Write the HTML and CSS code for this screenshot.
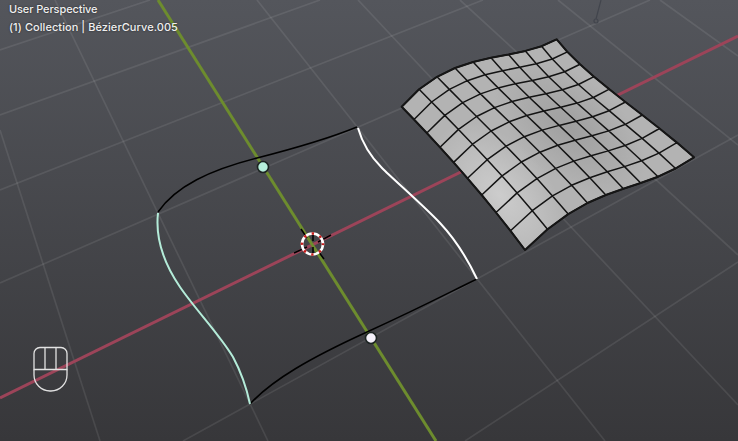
FILE: index.html
```html
<!DOCTYPE html>
<html lang="en">
<head>
    <meta charset="UTF-8">
    <title>User Perspective</title>
    <link rel="stylesheet" href="styles.css">
</head>
<body>
    <div class="viewport">
        <svg class="scene" viewBox="0 0 738 441" width="738" height="441">
            <defs>
                <radialGradient id="shade-dark" gradientUnits="userSpaceOnUse" cx="0" cy="0" r="1" gradientTransform="translate(570 128) rotate(40) scale(90 50)">
                    <stop offset="0" stop-color="#949494" stop-opacity="0.65"/>
                    <stop offset="1" stop-color="#949494" stop-opacity="0"/>
                </radialGradient>
                <radialGradient id="shade-light" gradientUnits="userSpaceOnUse" cx="0" cy="0" r="1" gradientTransform="translate(500 195) rotate(50) scale(85 50)">
                    <stop offset="0" stop-color="#cfcfcf" stop-opacity="0.9"/>
                    <stop offset="1" stop-color="#cfcfcf" stop-opacity="0"/>
                </radialGradient>
                <clipPath id="patch-clip"><path id="patch-outline"/></clipPath>
            </defs>

            <!-- floor grid -->
            <g class="grid-lines">
                <line x1="0" y1="130" x2="100" y2="441"/>
                <line x1="55" y1="0" x2="268" y2="441"/>
                <line x1="257" y1="0" x2="605" y2="441"/>
                <line x1="358" y1="0" x2="738" y2="405"/>
                <line x1="460" y1="0" x2="738" y2="255"/>
                <line x1="558" y1="0" x2="738" y2="145"/>
                <line x1="660" y1="0" x2="738" y2="56"/>
                <line x1="0" y1="50" x2="150" y2="0"/>
                <line x1="0" y1="115" x2="320" y2="0"/>
                <line x1="0" y1="190" x2="483" y2="0"/>
                <line x1="0" y1="283" x2="650" y2="0"/>
                <line x1="183" y1="441" x2="738" y2="135"/>
                <line x1="465" y1="441" x2="738" y2="262"/>
            </g>
            <line class="axis-x" x1="0" y1="398" x2="738" y2="36"/>
            <line class="axis-y" x1="158" y1="0" x2="436" y2="441"/>

            <!-- light far away -->
            <line class="lamp" x1="601" y1="0" x2="596" y2="19"/>
            <circle class="lamp" cx="596" cy="21" r="2"/>

            <!-- surface -->
            <g clip-path="url(#patch-clip)">
                <rect class="patch-base" x="400" y="38" width="296" height="214"/>
                <rect x="400" y="38" width="296" height="214" fill="url(#shade-light)"/>
                <rect x="400" y="38" width="296" height="214" fill="url(#shade-dark)"/>
            </g>
            <path id="patch-wires" class="patch-wires"/>
            <path id="patch-edge" class="patch-edge"/>

            <!-- bezier curves -->
            <path class="curve curve-black" d="M158 212 C176 186 210 170 257 158 S330 138 357 127"/>
            <path class="curve curve-black" d="M250 404 C272 380 310 358 367 332 S450 292 477 279"/>
            <path class="curve curve-cyan" d="M158 213 C155 240 165 265 180 287 S220 335 233 357 C240 370 247 390 250 404"/>
            <path class="curve curve-white" d="M358 128 C362 142 371 157 382 168 S425 207 440 223 S468 260 477 279"/>
            <circle class="handle handle-cyan" cx="263" cy="167" r="5.5"/>
            <circle class="handle handle-white" cx="371" cy="338" r="5.5"/>

            <!-- 3d cursor -->
            <g class="cursor-cross">
                <line x1="301" y1="229" x2="307" y2="238"/>
                <line x1="318" y1="251" x2="324" y2="259"/>
                <line x1="294" y1="253" x2="307" y2="247"/>
                <line x1="318" y1="242" x2="331" y2="235"/>
                <line x1="313" y1="233" x2="313" y2="241"/>
                <line x1="313" y1="247" x2="313" y2="255"/>
            </g>
            <circle class="cursor-ring" cx="312.5" cy="244" r="10.5"/>
            <circle class="cursor-dash" cx="312.5" cy="244" r="10.5"/>

            <!-- mouse hint -->
            <g class="mouse-icon">
                <path d="M34 369.5 V353.5 a6 6 0 0 1 6 -6 H61 a6 6 0 0 1 6 6 V369.5 Z"/>
                <path d="M45 347.5 V369.5 M56 347.5 V369.5"/>
                <path d="M34 369.5 V375 a16 16 0 0 0 16 16 h1 a16 16 0 0 0 16 -16 V369.5"/>
            </g>
        </svg>

        <div class="overlay-text">
            <div class="view-name">User Perspective</div>
            <div class="object-name">(1) Collection | BézierCurve.005</div>
        </div>
    </div>
    <script src="patch.js"></script>
</body>
</html>
```
FILE: styles.css
```css
body {
    margin: 0;
    background-color: #3a3a3c;
}

.viewport {
    position: relative;
    width: 738px;
    height: 441px;
    overflow: hidden;
    background: linear-gradient(to bottom, #54565c, #37373a);
}

.scene {
    position: absolute;
    top: 0;
    left: 0;
    display: block;
}

.overlay-text {
    position: absolute;
    top: 0;
    left: 9px;
    font-family: Inter, "Liberation Sans", sans-serif;
    font-size: 11px;
    font-weight: 500;
    line-height: 18px;
    color: #f0f0f0;
    text-shadow: 0 0 2px rgba(0, 0, 0, 0.6);
}

.view-name {
    letter-spacing: -0.1px;
}

.object-name {
    letter-spacing: 0.06px;
}

.grid-lines line {
    stroke: #fff;
    stroke-opacity: 0.085;
    stroke-width: 1.7;
}

.axis-x {
    stroke: #9c4459;
    stroke-width: 3;
}

.axis-y {
    stroke: #6d8c2e;
    stroke-width: 3;
}

.lamp {
    fill: none;
    stroke: #42454d;
    stroke-width: 1.2;
}

.patch-base {
    fill: #b3b3b3;
}

.patch-wires {
    fill: none;
    stroke: #141414;
    stroke-width: 1.5;
    stroke-linejoin: round;
}

.patch-edge {
    fill: none;
    stroke: #161616;
    stroke-width: 2;
    stroke-linejoin: round;
}

.curve {
    fill: none;
    stroke-width: 1.5;
}

.curve-black {
    stroke: #000;
}

.curve-cyan {
    stroke: #b4ecd9;
    stroke-width: 2;
}

.curve-white {
    stroke: #fff;
    stroke-width: 2;
}

.handle {
    stroke: #1c2422;
    stroke-width: 1.6;
}

.handle-cyan {
    fill: #b6f0dc;
}

.handle-white {
    fill: #f4f0fa;
}

.cursor-cross line {
    stroke: #000;
    stroke-width: 1.5;
}

.cursor-ring {
    fill: none;
    stroke: #fff;
    stroke-width: 2.6;
}

.cursor-dash {
    fill: none;
    stroke: #c81e1e;
    stroke-width: 2.6;
    stroke-dasharray: 2.4 5.85;
    stroke-dashoffset: 1.2;
}

.mouse-icon path {
    fill: none;
    stroke: #e2e2e2;
    stroke-width: 1.3;
}
```
FILE: patch.js
```js
// Cubic edges of the surface, four control points each
const topEdge = [[401.7,106.7],[453.1,46.4],[513,64.3],[556.7,39.3]];
const bottomEdge = [[525,250],[595.3,178.6],[637.5,196.8],[694,157.3]];
const leftEdge = [[401.7,106.7],[437.7,143.8],[481.5,191.3],[525,250]];
const rightEdge = [[556.7,39.3],[586,77.3],[643.1,112],[694,157.3]];

function cubic(edge, t, k) {
    const s = 1 - t;
    return s * s * s * edge[0][k] + 3 * s * s * t * edge[1][k] + 3 * s * t * t * edge[2][k] + t * t * t * edge[3][k];
}

// Coons patch from the four edges
function patchPoint(u, v) {
    return [0, 1].map(k =>
        (1 - v) * cubic(topEdge, u, k) + v * cubic(bottomEdge, u, k) +
        (1 - u) * cubic(leftEdge, v, k) + u * cubic(rightEdge, v, k) -
        ((1 - u) * (1 - v) * topEdge[0][k] + u * (1 - v) * topEdge[3][k] +
         (1 - u) * v * bottomEdge[0][k] + u * v * bottomEdge[3][k])
    );
}

function polyline(points) {
    return points.map((p, n) => (n ? 'L' : 'M') + p[0].toFixed(1) + ' ' + p[1].toFixed(1)).join(' ');
}

const steps = [0, 1, 2, 3, 4, 5, 6, 7, 8, 9];
let wires = '';
for (const n of steps) {
    wires += polyline(steps.map(m => patchPoint(m / 9, n / 9))) + ' ';
    wires += polyline(steps.map(m => patchPoint(n / 9, m / 9))) + ' ';
}

const outline = polyline([
    ...steps.map(m => patchPoint(m / 9, 0)),
    ...steps.map(m => patchPoint(1, m / 9)),
    ...steps.map(m => patchPoint((9 - m) / 9, 1)),
    ...steps.map(m => patchPoint(0, (9 - m) / 9))
]) + ' Z';

document.getElementById('patch-wires').setAttribute('d', wires);
document.getElementById('patch-edge').setAttribute('d', outline);
document.getElementById('patch-outline').setAttribute('d', outline);
```
